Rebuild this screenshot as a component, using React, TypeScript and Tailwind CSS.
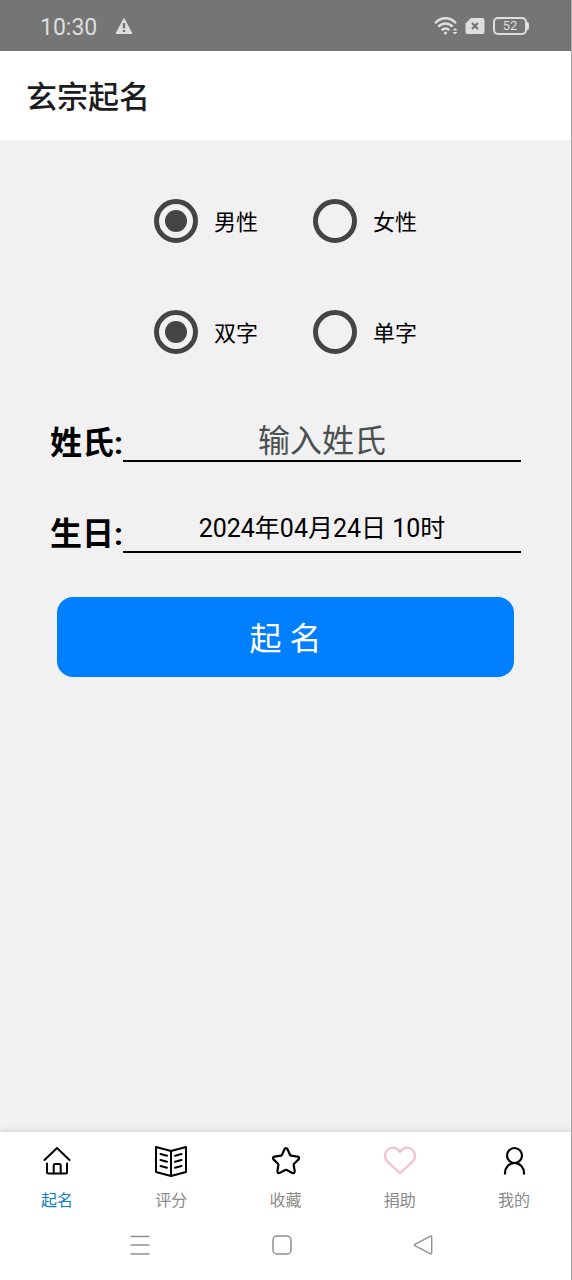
import { useState } from 'react';

const StatusBar = () => (
  <div className="flex h-[51px] items-center justify-between bg-[#757575] pl-10 pr-[42px] text-[#dedede]">
    <div className="flex items-center gap-[18px]">
      <span className="pt-1 text-[23px] leading-7">10:30</span>
      <svg width="18" height="18" viewBox="0 0 18 18">
        <path d="M9 1.5 17 16.5H1Z" fill="currentColor" stroke="currentColor" strokeLinejoin="round" />
        <path d="M9 6v5.5M9 13v2" stroke="#757575" strokeWidth="2.4" />
      </svg>
    </div>
    <div className="flex items-center gap-[6px]">
      <svg width="25" height="20" viewBox="0 0 25 20" fill="none" stroke="currentColor" strokeWidth="2.4">
        <path d="M1 7.2C7 .6 16 .6 22 7.2" />
        <path d="M4.3 10.8c4-4.4 10.4-4.4 14.4 0" />
        <path d="M7.7 14.2c2.2-2.2 5.4-2.2 7.6 0" />
        <circle cx="11.5" cy="17" r="1.6" fill="currentColor" stroke="none" />
        <path d="M18.5 14.5h5L21 12ZM18.5 16h5L21 18.5Z" fill="currentColor" stroke="none" />
      </svg>
      <svg width="20" height="18" viewBox="0 0 20 18">
        <path d="M6 1h11.5a2 2 0 0 1 2 2v12a2 2 0 0 1-2 2h-15a2 2 0 0 1-2-2V6.5Z" fill="currentColor" />
        <path d="m7 6 6 6M13 6l-6 6" stroke="#757575" strokeWidth="2.2" />
      </svg>
      <div className="flex items-center pl-[2px]">
        <span className="flex h-[18px] w-[34px] items-center justify-center rounded-[5px] border-2 border-current text-[13px] leading-none">
          52
        </span>
        <span className="h-2 w-[2px] rounded-r bg-current" />
      </div>
    </div>
  </div>
);

type RadioRowProps = {
  name: string;
  options: string[];
  value: string;
  onChange: (value: string) => void;
};

const RadioRow = ({ name, options, value, onChange }: RadioRowProps) => (
  <div className="flex justify-center gap-[55px]">
    {options.map((option) => (
      <label key={option} className="flex items-center gap-4 text-[22px] text-black">
        <span className="grid size-11 place-items-center">
          <input
            type="radio"
            name={name}
            checked={value === option}
            onChange={() => onChange(option)}
            className="peer col-start-1 row-start-1 size-11 appearance-none rounded-full border-[5px] border-[#444444]"
          />
          <span className="pointer-events-none col-start-1 row-start-1 hidden size-[22px] rounded-full bg-[#444444] peer-checked:block" />
        </span>
        <span className="pt-[2px]">{option}</span>
      </label>
    ))}
  </div>
);

const HomeIcon = () => (
  <svg width="32" height="32" viewBox="0 0 32 32" fill="none" stroke="currentColor" strokeWidth="2" strokeLinecap="round" strokeLinejoin="round">
    <path d="M3.5 15 16 3l12.5 12" />
    <path d="M6 18.5V27A1.5 1.5 0 0 0 7.500 28.5h17A1.500 1.500 0 0 0 26 27v-8.500" />
    <path d="M12.700 28.500v-8a1.500 1.500 0 0 1 1.500-1.500h4a1.500 1.500 0 0 1 1.500 1.500v8" />
  </svg>
);

const BookIcon = () => (
  <svg width="32" height="32" viewBox="0 0 32 32" fill="none" stroke="currentColor" strokeWidth="2" strokeLinecap="round" strokeLinejoin="round">
    <path d="M16 6 1 2v25l15 4 15-4V2Z" />
    <path d="M16 6v25" />
    <path d="m5.5 9 6.500 1.700M5.500 15l6.500 1.700M5.500 21l6.500 1.700M26.500 9 20 10.700M26.500 15 20 16.700M26.500 21 20 22.700" />
  </svg>
);

const StarIcon = () => (
  <svg width="32" height="32" viewBox="0 0 32 32" fill="none" stroke="currentColor" strokeWidth="2.2" strokeLinejoin="round">
    <path d="M14.6 4c.6-1.300 2.200-1.300 2.800 0l2.700 6c.2.400.5.600.9.700l6.600.9c1.500.2 2 1.800 1 2.800l-4.500 4.400c-.3.300-.4.700-.4 1.100l1 6.200c.2 1.500-1 2.500-2.400 1.800l-5.500-2.900c-.5-.2-1-.2-1.500 0l-5.500 2.900c-1.400.7-2.600-.3-2.400-1.800l1-6.200c.1-.4 0-.8-.4-1.100l-4.500-4.400c-1-1-.5-2.600 1-2.800l6.500-.9c.4-.1.700-.3.900-.7Z" />
  </svg>
);

const HeartIcon = () => (
  <svg width="32" height="32" viewBox="0 0 32 32" fill="none" stroke="#f3c3cf" strokeWidth="2.4" strokeLinejoin="round">
    <path d="M16 7C12.800 1.600 6.500 1.600 3.200 5.200 0 8.800.6 13.700 3.700 16.800L16 28.200l12.300-11.400c3.100-3.100 3.700-8 .5-11.600C25.500 1.600 19.200 1.600 16 7Z" />
  </svg>
);

const UserIcon = () => (
  <svg width="32" height="32" viewBox="0 0 32 32" fill="none" stroke="currentColor" strokeWidth="2.2">
    <circle cx="16.5" cy="10.500" r="7.500" />
    <path d="M7 29.500v-1.500c0-5.500 4-10 9.500-10s9.500 4.500 9.500 10v1.500" />
  </svg>
);

const tabs = [
  { label: '起名', Icon: HomeIcon },
  { label: '评分', Icon: BookIcon },
  { label: '收藏', Icon: StarIcon },
  { label: '捐助', Icon: HeartIcon },
  { label: '我的', Icon: UserIcon },
];

const fieldClass =
  'h-11 min-w-0 flex-1 border-b-2 border-black text-center text-black outline-none placeholder:text-[#4a504e]';

const App = () => {
  const [gender, setGender] = useState('男性');
  const [length, setLength] = useState('双字');
  const [surname, setSurname] = useState('');
  const [birthday, setBirthday] = useState('2024年04月24日 10时');
  const [activeTab, setActiveTab] = useState('起名');

  return (
    <div className="flex min-h-screen flex-col border-r border-[#a8a8a8] bg-[#f1f1f1] font-['Roboto','Noto_Sans_CJK_SC',sans-serif]">
      <StatusBar />

      <header className="flex h-[89px] items-center bg-white px-[26px] pt-[6px]">
        <h1 className="text-[31px] font-medium text-[#1c1c1e]">玄宗起名</h1>
      </header>

      <main className="flex-1 pt-[59px]">
        <form onSubmit={(e) => e.preventDefault()}>
          <div className="flex flex-col gap-[67px]">
            <RadioRow name="gender" options={['男性', '女性']} value={gender} onChange={setGender} />
            <RadioRow name="length" options={['双字', '单字']} value={length} onChange={setLength} />
          </div>

          <div className="mt-16 flex flex-col gap-[47px] px-[50px]">
            <div className="flex items-end">
              <label htmlFor="surname" className="text-[32px] font-bold leading-[38px]">姓氏:</label>
              <input
                id="surname"
                value={surname}
                onChange={(e) => setSurname(e.target.value)}
                placeholder="输入姓氏"
                className={`${fieldClass} pt-1 text-[32px]`}
              />
            </div>
            <div className="flex items-end">
              <label htmlFor="birthday" className="text-[32px] font-bold leading-[38px]">生日:</label>
              <input
                id="birthday"
                value={birthday}
                onChange={(e) => setBirthday(e.target.value)}
                className={`${fieldClass} pb-2 text-[25px]`}
              />
            </div>
          </div>

          <div className="mt-11 px-[57px]">
            <button type="submit" className="h-20 w-full rounded-2xl bg-[#007fff] pt-1 text-[32px] text-white">
              起 名
            </button>
          </div>
        </form>
      </main>

      <nav className="flex h-[88px] bg-white shadow-[0_-1px_6px_rgba(0,0,0,0.14)]">
        {tabs.map(({ label, Icon }) => (
          <button
            key={label}
            type="button"
            onClick={() => setActiveTab(label)}
            className="flex flex-1 flex-col items-center gap-3 pt-[13px] text-black"
          >
            <Icon />
            <span className={`text-base leading-6 ${activeTab === label ? 'text-[#0b7bd0]' : 'text-[#8a8a8a]'}`}>
              {label}
            </span>
          </button>
        ))}
      </nav>

      <div className="flex h-[60px] items-start justify-between bg-white pl-[130px] pr-[138px] pt-[15px] text-[#8f8f8f]">
        <button type="button" aria-label="Menu">
          <svg width="20" height="20" viewBox="0 0 20 20" stroke="currentColor" strokeWidth="1.6">
            <path d="M.5 1.500h19M.5 10h19M.5 19h19" />
          </svg>
        </button>
        <button type="button" aria-label="Home">
          <svg width="20" height="20" viewBox="0 0 20 20" fill="none" stroke="currentColor" strokeWidth="1.5">
            <rect x="1" y="1" width="18" height="18" rx="4" />
          </svg>
        </button>
        <button type="button" aria-label="Back">
          <svg width="20" height="20" viewBox="0 0 20 20" fill="none" stroke="currentColor" strokeWidth="1.4" strokeLinejoin="round">
            <path d="M17.500 1.200 1.800 9.300c-.6.400-.6 1 0 1.400l15.700 8.100c.6.300 1.200 0 1.200-.7V1.900c0-.7-.6-1-1.200-.7Z" />
          </svg>
        </button>
      </div>
    </div>
  );
};

export default App;
